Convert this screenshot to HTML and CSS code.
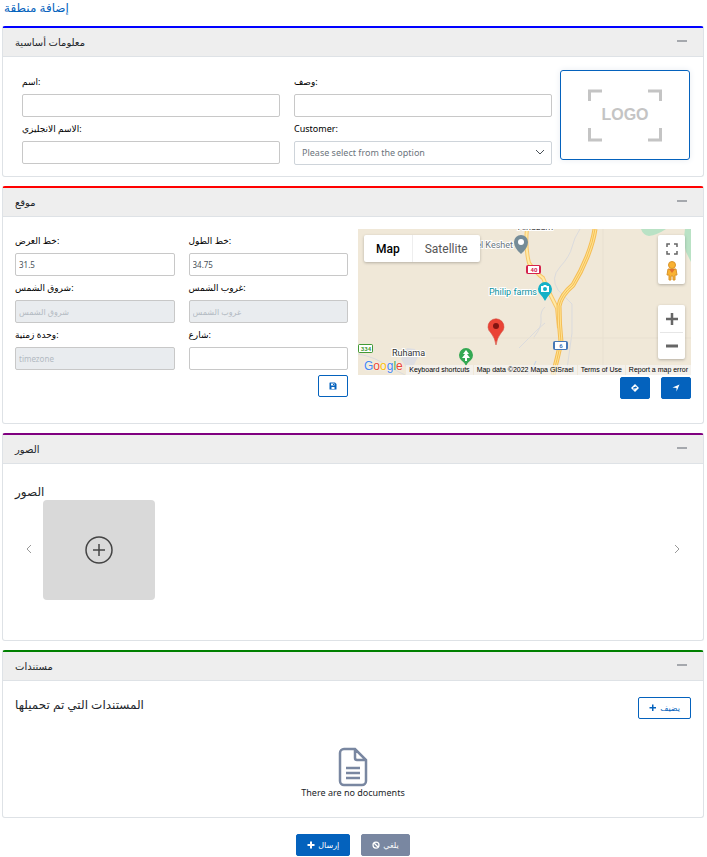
FILE: index.html
```html
<!DOCTYPE html>
<html lang="ar">
<head>
<meta charset="utf-8">
<meta name="viewport" content="width=device-width, initial-scale=1">
<title>إضافة منطقة</title>
<link rel="stylesheet" href="styles.css">
</head>
<body>
<main class="page">
  <h1 class="page-title">إضافة منطقة</h1>

  <section class="card card-blue">
    <header class="card-header">
      <h2>معلومات أساسية</h2>
      <button class="collapse" type="button" aria-label="Collapse"></button>
    </header>
    <div class="card-body basics">
      <div class="fields">
        <div class="field"><label for="name">اسم:</label><input id="name" type="text"></div>
        <div class="field"><label for="desc">وصف:</label><input id="desc" type="text"></div>
        <div class="field"><label for="name-en">الاسم الانجليزي:</label><input id="name-en" type="text"></div>
        <div class="field">
          <label for="customer">Customer:</label>
          <div class="select-wrap">
            <select id="customer"><option>Please select from the option</option></select>
            <svg class="chevron" viewBox="0 0 10 6" aria-hidden="true"><path d="M1 1l4 4 4-4"/></svg>
          </div>
        </div>
      </div>
      <button class="logo-box" type="button">
        <svg viewBox="0 0 76 54" aria-hidden="true"><path d="M2.500 13V3H15M61 3h12.500v10M73.500 40v12H61M15 52H2.500V40"/></svg>
        <span>LOGO</span>
      </button>
    </div>
  </section>

  <section class="card card-red">
    <header class="card-header">
      <h2>موقع</h2>
      <button class="collapse" type="button" aria-label="Collapse"></button>
    </header>
    <div class="card-body location">
      <div class="location-form">
        <div class="fields">
          <div class="field"><label for="lat">خط العرض:</label><input id="lat" type="text" value="31.5"></div>
          <div class="field"><label for="lng">خط الطول:</label><input id="lng" type="text" value="34.75"></div>
          <div class="field"><label for="sunrise">شروق الشمس:</label><input id="sunrise" type="text" placeholder="شروق الشمس" disabled></div>
          <div class="field"><label for="sunset">غروب الشمس:</label><input id="sunset" type="text" placeholder="غروب الشمس" disabled></div>
          <div class="field"><label for="tz">وحدة زمنية:</label><input id="tz" type="text" placeholder="timezone" disabled></div>
          <div class="field"><label for="street">شارع:</label><input id="street" type="text"></div>
        </div>
        <button class="btn btn-outline btn-icon save" type="button" aria-label="Save">
          <svg viewBox="0 0 16 16" aria-hidden="true"><path fill-rule="evenodd" d="M2 1h10l3 3v10a1 1 0 0 1-1 1H2a1 1 0 0 1-1-1V2a1 1 0 0 1 1-1zM4 3v4h7V3zM5 10v4h6v-4zM8 4h2v2H8z"/></svg>
        </button>
      </div>
      <div class="location-map">
        <div class="map">
          <svg class="map-canvas" viewBox="0 0 333 146" preserveAspectRatio="xMidYMid slice" role="img" aria-label="Map">
            <rect width="333" height="146" fill="#f0e8d8"/>
            <path fill="#b9e2c5" d="M283 0q2 6 8 7q8-1 17-7zM327 0q-2 14 1 23l5 10V0z"/>
            <g fill="none" stroke="#dbdbdd" stroke-width="1">
              <path d="M222 0q-6 9-8 18t-12 20-2 23l14 14v29l-5 36M161 119l19-19 7-6M176 108q8-10 7-18t4-12M0 125q18 3 31 13l16 8"/>
              <path stroke="#e8e0d1" d="M72 109h105M245 0v146M175 109h158"/>
              <path stroke="#c1d4ec" d="M178 132l-4 9-5 5"/>
            </g>
            <path d="M49 119l8 1 3 8-4 8-8 2-5-8z" fill="#dedee2"/>
            <g fill="none" stroke-linejoin="round">
              <path class="road-edge" d="M169 0q-2 18 2 34 7 10 14 15l7 16 7 14 2 20"/>
              <path class="road-fill" d="M169 0q-2 18 2 34 7 10 14 15l7 16 7 14 2 20"/>
              <path class="highway-edge" d="M237 0q-2 13-8 28t-14 28q-12 10-14 21 0 18 2 36-4 18-8 33"/>
              <path class="highway-fill" d="M237 0q-2 13-8 28t-14 28q-12 10-14 21 0 18 2 36-4 18-8 33"/>
              <path class="highway-line" d="M237 0q-2 13-8 28t-14 28q-12 10-14 21 0 18 2 36-4 18-8 33"/>
            </g>
            <g class="shield">
              <rect x="168" y="36" width="15" height="9" rx="2" fill="#d5224c"/><rect x="170" y="37" width="11" height="7" fill="#fff"/>
              <text x="176" y="43" fill="#d5224c">40</text>
              <rect x="195" y="112" width="15" height="9" rx="2" fill="#4577b5"/><rect x="197" y="113" width="11" height="7" fill="#fff"/>
              <text x="203" y="119" fill="#4577b5">6</text>
              <rect x="0" y="115" width="15" height="9" rx="2" fill="#429a35"/><rect x="1" y="116" width="13" height="7" fill="#fff"/>
              <text x="8" y="122" fill="#429a35">334</text>
            </g>
            <g class="place">
              <text x="160" y="1" fill="#444">Alhazam</text>
              <text class="place-end" x="155" y="19" fill="#69757c">Nahel Keshet</text>
              <text class="place-end" x="179" y="66" fill="#0c919e">Philip farms</text>
              <text x="34" y="127" fill="#333">Ruhama</text>
            </g>
            <path fill="#758c98" d="M163 25q-7-6-7-12a7 7 0 0 1 14 0q0 6-7 12z"/><circle cx="163" cy="13" r="3" fill="#fff"/>
            <path fill="#14b0c6" d="M187 72q-2-4-5-7a7 7 0 1 1 10 0q-3 3-5 7z"/>
            <path fill="#fff" d="M183 57h2l1-1h2l1 1h2v6h-8z"/><circle cx="187" cy="60" r="2" fill="#14b0c6"/>
            <path fill="#34a853" d="M108 137q-2-4-5-6a7 7 0 1 1 10 0q-3 2-5 6z"/>
            <path fill="#fff" d="M108 121l3 4h-2l3 4h-3v3h-2v-3h-3l3-4h-2z"/>
            <path fill="#ea4335" stroke="#cf3a2e" stroke-width=".5" d="M138 116q-1-7-5-12a8 8 0 1 1 10 0q-4 5-5 12z"/><circle cx="138" cy="97" r="3" fill="#811411"/>
          </svg>
          <div class="map-type">
            <button type="button" class="active">Map</button>
            <button type="button">Satellite</button>
          </div>
          <div class="map-view">
            <button type="button" aria-label="Fullscreen"><svg width="12" height="12" viewBox="0 0 12 12" fill="none" stroke="#666" stroke-width="1.500" aria-hidden="true"><path d="M1 4V1h3M8 1h3v3M11 8v3H8M4 11H1V8"/></svg></button>
            <button type="button" aria-label="Street View"><svg width="12" height="20" viewBox="0 0 12 20" aria-hidden="true"><circle cx="6" cy="4" r="3.500" fill="#f9b232" stroke="#d9942b"/><path fill="#f9b232" stroke="#d9942b" d="M2 8h8l1 6H9v5H7v-4H5v4H3v-5H1z"/><path fill="#e2702d" d="M3 8h6l-3 4z"/></svg></button>
          </div>
          <div class="map-zoom">
            <button type="button" aria-label="Zoom in"><svg width="12" height="12" viewBox="0 0 12 12" aria-hidden="true"><path d="M6 0v12M0 6h12" stroke="#666" stroke-width="2.500"/></svg></button>
            <button type="button" aria-label="Zoom out"><svg width="12" height="12" viewBox="0 0 12 12" aria-hidden="true"><path d="M0 6h12" stroke="#666" stroke-width="3"/></svg></button>
          </div>
          <div class="google"><span class="g-blue">G</span><span class="g-red">o</span><span class="g-yellow">o</span><span class="g-blue">g</span><span class="g-green">l</span><span class="g-red">e</span></div>
          <div class="map-legal">
            <button type="button">Keyboard shortcuts</button><span>Map data ©2022 Mapa GISrael</span><a href="#">Terms of Use</a><a href="#">Report a map error</a>
          </div>
        </div>
        <div class="map-actions">
          <button class="btn btn-primary btn-icon" type="button" aria-label="Directions"><svg viewBox="0 0 16 16" aria-hidden="true"><path fill-rule="evenodd" d="M8 0l8 8-8 8-8-8zM9 4v2H5v5h2V8h2v2l3-3z"/></svg></button>
          <button class="btn btn-primary btn-icon" type="button" aria-label="My location"><svg viewBox="0 0 16 16" aria-hidden="true"><path d="M15 1L9 15V8L1 7z"/></svg></button>
        </div>
      </div>
    </div>
  </section>

  <section class="card card-purple">
    <header class="card-header">
      <h2>الصور</h2>
      <button class="collapse" type="button" aria-label="Collapse"></button>
    </header>
    <div class="card-body images">
      <h3>الصور</h3>
      <div class="carousel">
        <button class="arrow" type="button" aria-label="Previous"><svg viewBox="0 0 6 10" aria-hidden="true"><path d="M5 1L1 5l4 4"/></svg></button>
        <button class="add-image" type="button" aria-label="Add image"><svg viewBox="0 0 28 28" aria-hidden="true"><circle cx="14" cy="14" r="13"/><path d="M14 8v12M8 14h12"/></svg></button>
        <button class="arrow arrow-next" type="button" aria-label="Next"><svg viewBox="0 0 6 10" aria-hidden="true"><path d="M1 1l4 4-4 4"/></svg></button>
      </div>
    </div>
  </section>

  <section class="card card-green">
    <header class="card-header">
      <h2>مستندات</h2>
      <button class="collapse" type="button" aria-label="Collapse"></button>
    </header>
    <div class="card-body documents">
      <div class="documents-head">
        <h3>المستندات التي تم تحميلها</h3>
        <button class="btn btn-outline" type="button"><svg viewBox="0 0 16 16" aria-hidden="true"><path d="M6 1h3v5h5v3H9v5H6V9H1V6h5z"/></svg><span>يضيف</span></button>
      </div>
      <div class="empty">
        <svg viewBox="0 0 30 40" aria-hidden="true"><path d="M6 2h11l11 11v21a4 4 0 0 1-4 4H6a4 4 0 0 1-4-4V6a4 4 0 0 1 4-4zM17 2v9q0 2 2 2h9M8 21h14M8 26h14M8 31h14"/></svg>
        <p>There are no documents</p>
      </div>
    </div>
  </section>

  <footer class="form-actions">
    <button class="btn btn-primary" type="submit"><svg viewBox="0 0 16 16" aria-hidden="true"><path d="M6 1h4v5h5v4h-5v5H6v-5H1V6h5z"/></svg><span>إرسال</span></button>
    <button class="btn btn-secondary" type="button"><svg viewBox="0 0 16 16" aria-hidden="true"><path fill="none" stroke="currentColor" stroke-width="2.500" d="M14 8a6 6 0 1 1-12 0a6 6 0 1 1 12 0M4 4l8 8"/></svg><span>يلغي</span></button>
  </footer>
</main>
</body>
</html>
```

FILE: styles.css
```css
* { box-sizing: border-box; }

body {
  margin: 0;
  background: #fff;
  color: #212529;
  font-family: "Noto Sans", "DejaVu Sans", sans-serif;
  font-size: 9px;
  line-height: 12px;
}

h1, h2, h3, p { margin: 0; font-weight: 400; }

h3 { font-size: 12px; line-height: 16px; }

button, input, select { font: inherit; margin: 0; }

button {
  padding: 0;
  border: 0;
  background: none;
  color: inherit;
  cursor: pointer;
}

.page {
  display: flex;
  flex-direction: column;
  gap: 9px;
  padding: 0 3px 0 2px;
}

.page-title {
  padding: 0 0 2px 2px;
  color: #0462bd;
  font-size: 12px;
  line-height: 15px;
}

.card {
  border: 1px solid #dee2e6;
  border-top: 2px solid;
  border-radius: 3px;
}

.card-blue { border-top-color: #00f; }
.card-red { border-top-color: #f00; }
.card-purple { border-top-color: #800080; }
.card-green { border-top-color: #008000; }

.card-header {
  display: flex;
  align-items: center;
  justify-content: space-between;
  height: 29px;
  padding: 0 16px 0 12px;
  border-bottom: 1px solid #dee2e6;
  background: #eee;
}

.card-header h2 { font-size: 10px; line-height: 14px; }

.collapse {
  width: 10px;
  height: 16px;
  padding-bottom: 2px;
}

.collapse::before {
  content: "";
  display: block;
  height: 2px;
  background: #a5a8ad;
}

.card-body { padding: 12px; }

.fields {
  display: grid;
  grid-template-columns: 1fr 1fr;
  column-gap: 14px;
}

.field { display: flex; flex-direction: column; min-width: 0; }

.field label { color: #000; line-height: 24px; }

.field input, .field select {
  width: 100%;
  height: 23px;
  padding: 0 3px;
  border: 1px solid #c8c8c8;
  border-radius: 2px;
  background: #fff;
  color: #495057;
  font-size: 8px;
}

.field input:disabled { background: #e9ecef; }
.field input::placeholder { color: #b3bac2; opacity: 1; }

.select-wrap { position: relative; height: 23px; }

.field select {
  height: 24px;
  padding: 0 20px 0 7px;
  border-color: #ced4da;
  color: #6c757d;
  font-size: 9px;
  appearance: none;
}

.chevron {
  position: absolute;
  top: 8px;
  right: 7px;
  width: 10px;
  height: 6px;
  fill: none;
  stroke: #495057;
  pointer-events: none;
}

.basics {
  display: flex;
  align-items: flex-start;
  gap: 8px;
  padding: 13px 13px 12px 19px;
}

.basics .fields { flex: 1; }

.logo-box {
  display: grid;
  place-items: center;
  width: 130px;
  height: 90px;
  border: 1px solid #0462bd;
  border-radius: 3px;
  color: #c4c4c4;
  box-shadow: 0 0 6px #e8edf2;
  font-family: "Liberation Sans", sans-serif;
  font-size: 16px;
  font-weight: 700;
}

.logo-box svg, .logo-box span { grid-area: 1 / 1; }
.logo-box svg { width: 76px; height: 54px; fill: none; stroke: currentColor; stroke-width: 3; }

.location {
  display: grid;
  grid-template-columns: 1fr 1fr;
  gap: 10px;
  padding-bottom: 24px;
}

.location-form { display: flex; flex-direction: column; gap: 5px; }

.btn {
  display: inline-flex;
  align-items: center;
  justify-content: center;
  gap: 3px;
  height: 22px;
  padding: 0 10px;
  border: 1px solid #0462bd;
  border-radius: 2px;
  font-size: 8px;
}

.btn svg { width: 8px; height: 8px; fill: currentColor; }
.btn-outline { color: #0462bd; background: #fff; }
.btn-primary { color: #fff; background: #0462bd; }
.btn-secondary { color: #fff; background: #7987a1; border-color: #7987a1; }
.btn-icon { width: 30px; padding: 0; }
.save { align-self: flex-end; }

.location-map { display: flex; flex-direction: column; gap: 2px; min-width: 0; }

.map {
  position: relative;
  height: 146px;
  overflow: hidden;
  font-family: Roboto, sans-serif;
}

.map-canvas { display: block; width: 100%; height: 100%; }
.road-edge { stroke: #f8c66a; stroke-width: 4; }
.road-fill { stroke: #ffeaa6; stroke-width: 2; }
.highway-edge { stroke: #f5bd55; stroke-width: 5; }
.highway-fill { stroke: #ffe391; stroke-width: 3; }
.highway-line { stroke: #f5bd55; stroke-width: 1; }
.shield text { font-size: 6px; font-weight: 700; text-anchor: middle; }

.place text {
  font-size: 9px;
  stroke: #fff;
  stroke-width: 2px;
  paint-order: stroke;
}

.place .place-end { text-anchor: end; }

.map-type, .map-view, .map-zoom {
  position: absolute;
  display: flex;
  border-radius: 2px;
  background: #fff;
  box-shadow: 0 1px 3px rgba(0, 0, 0, .25);
}

.map-type { top: 6px; left: 6px; }

.map-type button {
  height: 27px;
  padding: 0 12px;
  color: #565656;
  font-size: 12px;
}

.map-type button + button { border-left: 1px solid #eee; }
.map-type .active { color: #000; font-weight: 500; }

.map-view, .map-zoom { right: 6px; width: 27px; flex-direction: column; }
.map-view { top: 6px; }
.map-zoom { bottom: 16px; }
.map-view button, .map-zoom button { display: grid; place-items: center; }
.map-view button { height: 25px; }
.map-view button:first-child { padding-top: 3px; }
.map-view button + button { height: 24px; padding-bottom: 3px; }
.map-zoom button { height: 27px; margin: 0 2px; }
.map-zoom button + button { border-top: 1px solid #e6e6e6; }

.google {
  position: absolute;
  bottom: 2px;
  left: 6px;
  font-family: "Liberation Sans", sans-serif;
  font-size: 12px;
  line-height: 14px;
  text-shadow: 0 0 2px #fff;
}

.g-blue { color: #4285f4; }
.g-red { color: #ea4335; }
.g-yellow { color: #fbbc04; }
.g-green { color: #34a853; }

.map-legal {
  position: absolute;
  right: 0;
  bottom: 0;
  display: flex;
  gap: 1px;
  color: #000;
  font-size: 7px;
  font-family: "Liberation Sans", sans-serif;
  line-height: 10px;
  white-space: nowrap;
}

.map-legal > * {
  padding: 0 3px;
  background: rgba(245, 245, 245, .7);
  color: inherit;
  text-decoration: none;
}

.map-actions { display: flex; justify-content: flex-end; gap: 11px; }

.images { padding: 20px 12px 40px; }

.carousel { display: flex; align-items: center; }

.arrow { width: 28px; height: 28px; }
.arrow svg { width: 6px; height: 10px; fill: none; stroke: #999; }
.arrow-next { margin-left: auto; }

.add-image {
  display: grid;
  place-items: center;
  width: 112px;
  height: 100px;
  border-radius: 4px;
  background: #d9d9d9;
}

.add-image svg { width: 28px; height: 28px; fill: none; stroke: #444; stroke-width: 1.5px; }

.documents { padding: 16px 12px 18px; }

.documents-head {
  display: flex;
  align-items: flex-start;
  justify-content: space-between;
}

.empty {
  display: flex;
  flex-direction: column;
  align-items: center;
  padding-top: 28px;
}

.empty svg { width: 30px; height: 40px; fill: none; stroke: #7987a1; stroke-width: 2.5px; }

.form-actions {
  display: flex;
  justify-content: center;
  gap: 11px;
  padding-top: 7px;
}
```
